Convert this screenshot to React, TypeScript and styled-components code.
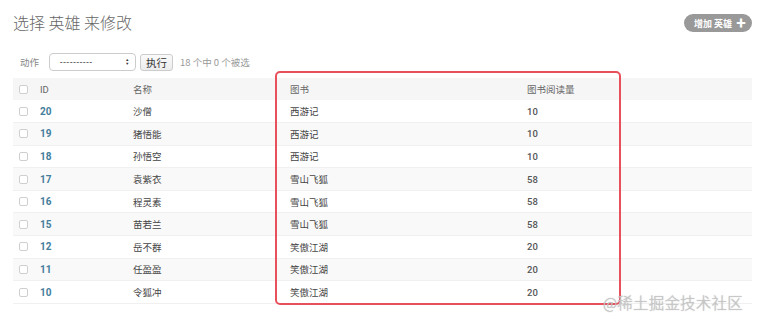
import React from "react";
import styled, { createGlobalStyle } from "styled-components";

const GlobalStyle = createGlobalStyle`
  html, body {
    margin: 0;
    padding: 0;
    background: #fff;
  }
  body {
    font-family: "Roboto", "Noto Sans CJK SC", sans-serif;
    color: #333;
  }
`;

const heroes = [
  { id: 20, name: "沙僧", book: "西游记", reads: 10 },
  { id: 19, name: "猪悟能", book: "西游记", reads: 10 },
  { id: 18, name: "孙悟空", book: "西游记", reads: 10 },
  { id: 17, name: "袁紫衣", book: "雪山飞狐", reads: 58 },
  { id: 16, name: "程灵素", book: "雪山飞狐", reads: 58 },
  { id: 15, name: "苗若兰", book: "雪山飞狐", reads: 58 },
  { id: 12, name: "岳不群", book: "笑傲江湖", reads: 20 },
  { id: 11, name: "任盈盈", book: "笑傲江湖", reads: 20 },
  { id: 10, name: "令狐冲", book: "笑傲江湖", reads: 20 },
];

const columns = ["ID", "名称", "图书", "图书阅读量"];
const colWidths = [22, 93, 157, 237, 230];

export default function App() {
  return (
    <>
      <GlobalStyle />
      <Page>
        <TopBar>
          <Title>选择 英雄 来修改</Title>
          <AddButton>
            增加 英雄 <Plus>✚</Plus>
          </AddButton>
        </TopBar>

        <Actions>
          <ActionLabel>动作</ActionLabel>
          <SelectBox>
            <span>----------</span>
            <Arrows>
              <span>▲</span>
              <span>▼</span>
            </Arrows>
          </SelectBox>
          <RunButton>执行</RunButton>
          <Counter>18 个中 0 个被选</Counter>
        </Actions>

        <Table>
          <colgroup>
            {colWidths.map((w, i) => (
              <col key={i} style={{ width: w }} />
            ))}
          </colgroup>
          <thead>
            <HeadRow>
              <Th>
                <Check />
              </Th>
              {columns.map((c) => (
                <Th key={c}>{c}</Th>
              ))}
            </HeadRow>
          </thead>
          <tbody>
            {heroes.map((h, i) => (
              <Row key={h.id} $odd={i % 2 === 1}>
                <Td>
                  <Check />
                </Td>
                <IdCell>{h.id}</IdCell>
                <Td>{h.name}</Td>
                <Td>{h.book}</Td>
                <NumCell>{h.reads}</NumCell>
              </Row>
            ))}
          </tbody>
        </Table>

        <Highlight />
        <Watermark>@稀土掘金技术社区</Watermark>
      </Page>
    </>
  );
}

const Page = styled.div`
  position: relative;
  width: 757px;
  height: 326px;
  box-sizing: border-box;
  padding: 12px 5px 0 13px;
  overflow: hidden;
`;

const TopBar = styled.div`
  display: flex;
  justify-content: space-between;
  align-items: center;
  height: 20px;
`;

const Title = styled.h1`
  margin: 0;
  font-family: "Noto Sans CJK SC", sans-serif;
  font-size: 16px;
  font-weight: 300;
  color: #666;
  line-height: 20px;
`;

const AddButton = styled.div`
  display: flex;
  align-items: center;
  gap: 4px;
  height: 18px;
  padding: 0 6px 0 10px;
  border-radius: 9px;
  background: #999;
  color: #fff;
  font-family: "Noto Sans CJK SC", sans-serif;
  font-size: 9px;
  font-weight: 700;
  margin-top: 2px;
`;

const Plus = styled.span`
  font-size: 10px;
  line-height: 1;
`;

const Actions = styled.div`
  display: flex;
  align-items: center;
  height: 18px;
  margin-top: 21px;
  padding-left: 7px;
  font-family: "Noto Sans CJK SC", sans-serif;
`;

const ActionLabel = styled.span`
  font-size: 9.5px;
  color: #888;
  margin-right: 10px;
`;

const SelectBox = styled.div`
  display: flex;
  justify-content: space-between;
  align-items: center;
  box-sizing: border-box;
  width: 87px;
  height: 18px;
  padding: 0 5px 0 10px;
  border: 1px solid #ccc;
  border-radius: 4px;
  background: #fff;
  font-family: "Roboto", sans-serif;
  font-size: 9px;
  color: #333;
  letter-spacing: 0.8px;
`;

const Arrows = styled.span`
  display: flex;
  flex-direction: column;
  font-size: 4px;
  line-height: 4px;
  color: #333;
`;

const RunButton = styled.div`
  box-sizing: border-box;
  height: 17px;
  margin-left: 4px;
  padding: 0 5px;
  border: 1px solid #ccc;
  border-radius: 3px;
  background: linear-gradient(#fafafa, #ececec);
  font-size: 10.5px;
  line-height: 15px;
  color: #333;
`;

const Counter = styled.span`
  margin-left: 7px;
  font-size: 9.5px;
  color: #999;
`;

const Table = styled.table`
  margin-top: 7px;
  width: 739px;
  table-layout: fixed;
  border-collapse: collapse;
  font-family: "Noto Sans CJK SC", sans-serif;
  font-size: 9.5px;
`;

const HeadRow = styled.tr`
  height: 22px;
  background: #f6f6f6;
`;

const Th = styled.th`
  padding: 0 0 0 5px;
  text-align: left;
  font-weight: 400;
  color: #666;
  font-family: "Roboto", "Noto Sans CJK SC", sans-serif;
`;

const Row = styled.tr<{ $odd: boolean }>`
  height: 22.6px;
  background: ${({ $odd }) => ($odd ? "#f9f9f9" : "#fff")};
  border-bottom: 1px solid #f0f0f0;
`;

const Td = styled.td`
  padding: 0 0 0 5px;
  color: #444;
`;

const IdCell = styled(Td)`
  font-family: "Roboto", sans-serif;
  font-weight: 700;
  font-size: 10px;
  color: #447e9b;
`;

const NumCell = styled(Td)`
  font-family: "Roboto", sans-serif;
  font-weight: 500;
  font-size: 9.5px;
  color: #555;
`;

const Check = styled.span`
  display: block;
  box-sizing: border-box;
  width: 9px;
  height: 9px;
  margin-left: 1px;
  border: 1px solid #cfcfcf;
  border-radius: 2px;
  background: #fff;
`;

const Highlight = styled.div`
  position: absolute;
  left: 275px;
  top: 71px;
  width: 346px;
  height: 234px;
  box-sizing: border-box;
  border: 2px solid #e8505b;
  border-radius: 5px;
  pointer-events: none;
`;

const Watermark = styled.div`
  position: absolute;
  left: 603px;
  top: 291px;
  font-family: "Noto Sans CJK SC", sans-serif;
  font-size: 15.5px;
  font-weight: 300;
  color: #c8c8c8;
  letter-spacing: 0.2px;
  text-shadow: 0 0 1px #aaa;
`;
